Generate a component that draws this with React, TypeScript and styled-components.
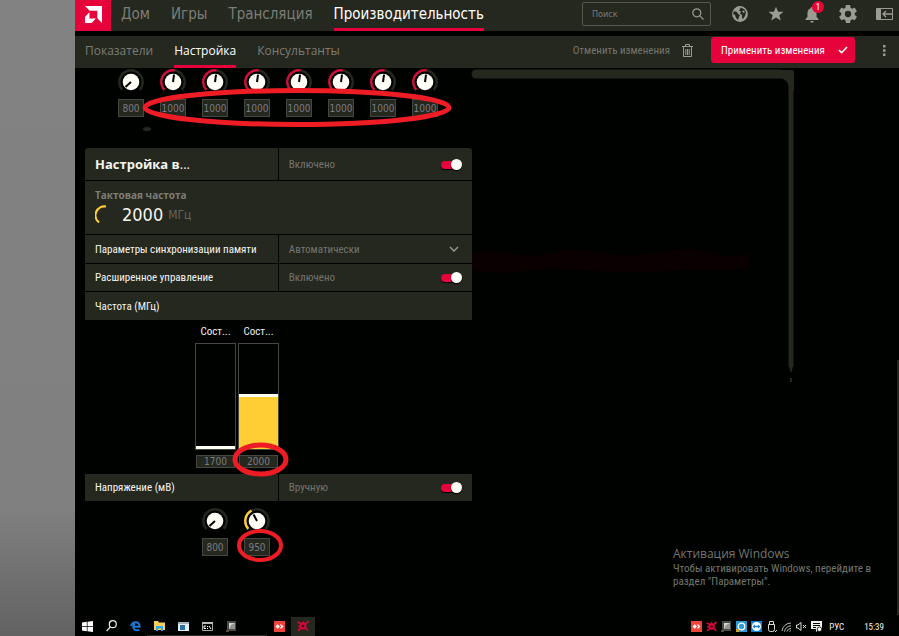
import React from "react";
import styled, { createGlobalStyle, css } from "styled-components";

const PANEL = "#25281f";
const RED = "#e6033b";
const YELLOW = "#ffce34";
const MUTED = "#74746f";
const ICON = "#9a9c91";
const MARK = "#ee1c24";

const TEXT = `"Roboto Condensed", Roboto, sans-serif`;
const WIDE = `"Open Sans", "Noto Sans", sans-serif`;
const DISPLAY = `"DejaVu Sans Condensed", "DejaVu Sans", sans-serif`;

const Global = createGlobalStyle`
  * { box-sizing: border-box; }
  body { margin: 0; background: #000200; color: #f4f4f0; font-family: ${TEXT}; font-size: 11px; }
  button, input, select { font: inherit; color: inherit; margin: 0; padding: 0; border: 0; background: none; }
  svg { display: block; flex: none; }
`;

const Page = styled.div`display: flex; min-height: 100vh;`;
const Margin = styled.div`
  flex: 0 0 75px;
  background: linear-gradient(#828282 0%, #808080 80%, #626262 100%);
`;
const Screen = styled.div`flex: 1; min-width: 0; display: flex; flex-direction: column;`;

const TopBar = styled.header`
  display: flex; align-items: stretch; height: 31px; padding-right: 6px; background: ${PANEL};
`;
const Logo = styled.a`
  display: grid; place-items: center; width: 36px; margin-right: 10px; padding-bottom: 3px; background: ${RED};
`;
const Tabs = styled.nav`display: flex; align-items: stretch; gap: 21px;`;
const Tab = styled.a<{ $active?: boolean; $small?: boolean }>`
  display: flex; align-items: center;
  text-decoration: none; white-space: nowrap;
  font-family: ${p => (p.$small ? WIDE : DISPLAY)};
  font-size: ${p => (p.$small ? 12 : 15)}px;
  color: ${p => (p.$active ? "#fff" : "#7c7d76")};
  border-bottom: 3px solid ${p => (p.$active ? RED : "transparent")};
`;
const Search = styled.label`
  display: flex; align-items: center; justify-content: space-between;
  width: 129px; height: 24px; margin: 2px 20px 0 auto; padding: 0 6px 0 9px;
  border: 1px solid #55584e; border-radius: 2px;
`;
const SearchInput = styled.input`
  width: 80px; font-family: ${DISPLAY}; font-size: 9px; outline: 0;
  &::placeholder { color: #7c7d76; opacity: 1; }
`;
const IconGroup = styled.div`display: flex; align-items: center; gap: 18px; padding-bottom: 3px;`;
const IconButton = styled.button`
  position: relative; display: grid; place-items: center; width: 18px; height: 20px; color: ${ICON}; cursor: pointer;
`;
const Badge = styled.span`
  position: absolute; top: -3px; right: -3px; width: 12px; height: 12px; border-radius: 50%;
  background: ${RED}; color: #fff; font-size: 9px; line-height: 12px; text-align: center;
`;

const SubBar = styled.div`
  display: flex; align-items: stretch; height: 32px; margin-top: 5px; padding: 0 6px 0 10px; background: ${PANEL};
`;
const Actions = styled.div`display: flex; align-items: center; margin-left: auto; padding-bottom: 4px;`;
const Discard = styled.button`
  display: flex; align-items: center; gap: 12px; margin-right: 18px; color: ${MUTED}; white-space: nowrap; cursor: pointer;
`;
const Apply = styled.button`
  display: flex; align-items: center; justify-content: space-between;
  width: 144px; height: 26px; margin-right: 20px; padding: 0 7px 0 10px;
  border-radius: 3px; background: ${RED}; color: #fff; white-space: nowrap; cursor: pointer;
`;

const Body = styled.main`position: relative; flex: 1; padding: 1px 0 0 10px;`;
const Settings = styled.div`width: 47.5%; min-width: 370px;`;
const Annotated = styled.div`position: relative;`;

const DialRow = styled.div<{ $indent: number }>`
  position: relative; display: flex; gap: 16px; padding-left: ${p => p.$indent}px;
`;
const DialItem = styled.label`display: flex; flex-direction: column; width: 26px;`;
const ValueBox = styled.input<{ $flat?: boolean }>`
  width: ${p => (p.$flat ? 39 : 26)}px; height: ${p => (p.$flat ? 13 : 18)}px;
  border: 1px solid #45483e; background: ${PANEL}; color: #7c7a80;
  font-family: ${DISPLAY}; font-size: 10px; text-align: center; outline: 0;
  ${p => !p.$flat && css`margin-top: 4px;`}
`;
const Mark = styled.svg`position: absolute; overflow: visible; pointer-events: none; z-index: 2;`;
const DialMark = styled(Mark)`left: 58px; top: 18px;`;
const BarMark = styled(Mark)`left: -6px; top: -12px;`;
const VoltMark = styled(Mark)`left: -7px; top: 21px;`;

const Card = styled.section`
  display: grid; gap: 1px; margin-top: 31px; border-radius: 3px 3px 0 0; overflow: hidden;
`;
const Row = styled.div<{ $h: number; $single?: boolean }>`
  display: grid; grid-template-columns: ${p => (p.$single ? "1fr" : "1fr 1fr")}; gap: 1px; height: ${p => p.$h}px;
`;
const Cell = styled.div`
  display: flex; align-items: center; justify-content: space-between;
  padding: 0 10px; background: ${PANEL}; white-space: nowrap; min-width: 0;
`;
const Title = styled.h2`margin: 0; font-family: ${WIDE}; font-size: 13px; font-weight: 700;`;
const Ellipsis = styled.span`font-weight: 400;`;
const State = styled.span`color: ${MUTED};`;
const Toggle = styled.input`
  appearance: none; position: relative; width: 21px; height: 11px; cursor: pointer;
  &::before { content: ""; position: absolute; left: 0; top: 2px; width: 18px; height: 8px; border-radius: 4px; background: ${RED}; box-shadow: 0 1px 1px #000; }
  &::after { content: ""; position: absolute; right: 0; top: 0; width: 11px; height: 11px; border-radius: 50%; background: #fffff8; box-shadow: 0 1px 1px #000; }
`;
const SelectWrap = styled.div`
  display: grid; grid-template-columns: 1fr 10px; align-items: center; flex: 1; padding-right: 3px;
`;
const Select = styled.select`appearance: none; color: ${MUTED}; outline: 0;`;
const Clock = styled.div`
  display: flex; flex-direction: column; justify-content: center; padding: 0 10px; background: ${PANEL};
`;
const ClockLabel = styled.div`color: #7c7d76; font-family: ${WIDE}; font-size: 10px; font-weight: 700; line-height: 14px;`;
const ClockValue = styled.div`display: flex; align-items: center; font-family: ${DISPLAY}; line-height: 26px;`;
const Big = styled.span`margin: 0 5px 0 16px; font-size: 18px;`;
const Unit = styled.span`color: #65665f; font-size: 12px;`;

const Bars = styled.div`display: flex; gap: 2px; padding: 4px 0 6px 110px;`;
const BarItem = styled.label`display: flex; flex-direction: column; align-items: center; width: 41px;`;
const BarName = styled.span`line-height: 16px; margin-bottom: 3px;`;
const Track = styled.div`
  display: flex; flex-direction: column; justify-content: flex-end; width: 100%; height: 107px; margin-bottom: 5px;
  border: 1px solid #45483e;
`;
const Fill = styled.div`border-top: 3px solid #fffff4; background: ${YELLOW};`;
const BoxWrap = styled.div`position: relative; height: 13px; display: flex;`;
const DialWrap = styled.div`position: relative;`;
const Section = styled.div`margin-bottom: 7px;`;

const Strokes = styled.svg`position: absolute; left: 397px; top: 0; overflow: visible; pointer-events: none;`;
const Speck = styled.svg`position: absolute; left: 58px; top: 58px;`;
const ScrollThumb = styled.div`position: absolute; right: 0; top: 292px; bottom: 2px; width: 2px; background: #24261f;`;
const Watermark = styled.aside`
  position: absolute; right: 24px; bottom: 29px; width: 202px; color: #74776e; line-height: 13px;
`;
const WatermarkTitle = styled.div`font-family: ${WIDE}; font-size: 12px; line-height: 17px;`;

const Taskbar = styled.footer`display: flex; align-items: stretch; justify-content: space-between; height: 19px; padding-right: 15px;`;
const TaskGroup = styled.div`display: flex;`;
const Task = styled.button<{ $open?: boolean; $active?: boolean }>`
  display: grid; place-items: center; width: 24px; cursor: pointer;
  background: ${p => (p.$active ? "#25281f" : "none")};
  border-bottom: 1px solid ${p => (p.$open ? "#2b2d28" : "transparent")};
`;
const Tray = styled.div`display: flex; align-items: center; gap: 4px;`;
const TrayText = styled.span<{ $gap: number }>`margin-left: ${p => p.$gap}px; font-size: 9px;`;

function arc(cx: number, cy: number, r: number, from: number, to: number) {
  const pt = (a: number) => {
    const t = ((a - 90) * Math.PI) / 180;
    return `${(cx + r * Math.cos(t)).toFixed(2)} ${(cy + r * Math.sin(t)).toFixed(2)}`;
  };
  return `M${pt(from)}A${r} ${r} 0 ${to - from > 180 ? 1 : 0} 1 ${pt(to)}`;
}

function Dial({ angle, color, value }: { angle: number; color: string; value: string }) {
  return (
    <DialItem>
      <svg width="26" height="26" viewBox="0 0 26 26">
        <path d={arc(13, 13, 11.7, -132, 132)} fill="none" stroke="#25281f" strokeWidth="2.4" />
        {angle > -130 && <path d={arc(13, 13, 11.7, -132, angle)} fill="none" stroke={color} strokeWidth="2.4" />}
        <circle cx="13" cy="13" r="8.3" fill="#fffff8" />
        <path d="M13 13V5.6" stroke="#000" strokeWidth="2" transform={`rotate(${angle} 13 13)`} />
      </svg>
      <ValueBox defaultValue={value} aria-label="Напряжение" />
    </DialItem>
  );
}

const AmdSwirl = ({ size = 12 }: { size?: number }) => (
  <svg width={size} height={size} viewBox="0 0 12 12" fill="none" stroke="#d5083c">
    <path d="M.5 2l3 1.500M11.500 1L8.500 4M1 10.500l3-2M11 10.500L8.500 8M5.500 1.500l1 2M1 6.500h2" strokeWidth="1.700" />
    <circle cx="6" cy="6" r="2.500" strokeWidth="2" fill="#5a0018" />
  </svg>
);
const AnyDesk = () => (
  <svg width="11" height="11" viewBox="0 0 11 11">
    <path d="M0 0h11v11H0z" fill="#ef443b" />
    <path d="M1.500 5.500l2.200-2.200 2.200 2.200-2.200 2.200zM6 4l1-.7 2.500 2.200L7 7.700 6 7l1.500-1.500z" fill="#fff" />
  </svg>
);
const Chip = () => (
  <svg width="11" height="11" viewBox="0 0 11 11">
    <path d="M1 0h9v10H1z" fill="#4b4b48" /><path d="M3 2h6v6H3z" fill="#d5d5d0" /><path d="M5 4l4-2v6H3z" fill="#969690" />
    <path d="M0 9h3v2H0z" fill="#5d4d30" />
  </svg>
);

const volts = ["800", "1000", "1000", "1000", "1000", "1000", "1000", "1000"];
const states = [{ v: "1700", fill: 0 }, { v: "2000", fill: 49 }];

export default function App() {
  return (
    <Page>
      <Global />
      <Margin />
      <Screen>
        <TopBar>
          <Logo href="#" aria-label="AMD">
            <svg width="17" height="17" viewBox="0 0 16 16" fill="#fff">
              <path d="M0 0H16V16L11.6 11.6V4.4H4.4zM4.2 5.8V11.8H10.2L6.2 16H0V10z" />
            </svg>
          </Logo>
          <Tabs>
            <Tab href="#">Дом</Tab>
            <Tab href="#">Игры</Tab>
            <Tab href="#">Трансляция</Tab>
            <Tab href="#" $active>Производительность</Tab>
          </Tabs>
          <Search>
            <SearchInput type="search" placeholder="Поиск" aria-label="Поиск" />
            <svg width="12" height="12" viewBox="0 0 12 12" fill="none" stroke={ICON} strokeWidth="1.2">
              <circle cx="4.8" cy="4.8" r="4" /><path d="M7.8 7.8l3.7 3.7" />
            </svg>
          </Search>
          <IconGroup>
            <IconButton aria-label="Браузер">
              <svg width="16" height="16" viewBox="0 0 16 16">
                <circle cx="8" cy="8" r="7.9" fill={ICON} />
                <path d="M2 5l3 1 1 2 2 1-1 2-1 3-2-2-1-3-2-1zM9 1.5l3.5 2L14 6l-1 4-2 3-1-1V9L8 7.500l1-2-2-1z" fill={PANEL} />
                <path d="M10 5l2-.5 1 1.500-1.500 1z" fill={ICON} />
              </svg>
            </IconButton>
            <IconButton aria-label="Избранное">
              <svg width="16" height="16" viewBox="0 0 16 16" fill={ICON}><path d="M8 .8l2.100 5H15.500l-4.200 3.400 1.500 5.300L8 11.400 3.200 14.500l1.500-5.300L.5 5.800H5.900z" /></svg>
            </IconButton>
            <IconButton aria-label="Уведомления">
              <svg width="16" height="17" viewBox="0 0 16 17" fill={ICON}><path d="M8 1c.8 0 1.300.5 1.300 1.300C11.500 3 12.500 4.800 12.500 7v4l2 2v1h-13v-1l2-2V7c0-2.200 1-4 3.200-4.700C6.700 1.500 7.200 1 8 1zM6.200 15h3.600a1.800 1.800 0 0 1-3.600 0z" /></svg>
              <Badge>1</Badge>
            </IconButton>
            <IconButton aria-label="Параметры">
              <svg width="18" height="18" viewBox="2 2 20 20" fill={ICON}><path d="M19.430 12.980c.04-.32.07-.64.07-.98s-.03-.66-.07-.98l2.110-1.650c.19-.15.24-.42.12-.64l-2-3.460c-.12-.22-.39-.3-.61-.22l-2.490 1c-.52-.4-1.080-.73-1.690-.98l-.38-2.650C14.460 2.180 14.250 2 14 2h-4c-.25 0-.46.18-.49.42l-.38 2.650c-.61.25-1.170.59-1.690.98l-2.490-1c-.23-.09-.49 0-.61.22l-2 3.460c-.13.22-.07.49.12.64l2.110 1.650c-.04.32-.07.65-.07.98s.03.66.07.98l-2.110 1.650c-.19.15-.24.42-.12.64l2 3.460c.12.22.39.3.61.22l2.490-1c.52.4 1.080.73 1.690.98l.38 2.650c.03.24.24.42.49.42h4c.25 0 .46-.18.49-.42l.38-2.650c.61-.25 1.170-.59 1.690-.98l2.490 1c.23.09.49 0 .61-.22l2-3.460c.12-.22.07-.49-.12-.64l-2.110-1.650zM12 15.500a3.500 3.500 0 1 1 0-7 3.500 3.500 0 0 1 0 7z" /></svg>
            </IconButton>
            <IconButton aria-label="Свернуть панель">
              <svg width="17" height="12" viewBox="0 0 17 12"><path d="M.5.5h16v11H.5z" fill="none" stroke={ICON} /><path d="M1 1h4v10H1z" fill={ICON} /><path d="M16 6H7M10 3L7 6l3 3" fill="none" stroke={ICON} strokeWidth="1.400" /></svg>
            </IconButton>
          </IconGroup>
        </TopBar>

        <SubBar>
          <Tabs>
            <Tab href="#" $small>Показатели</Tab>
            <Tab href="#" $small $active>Настройка</Tab>
            <Tab href="#" $small>Консультанты</Tab>
          </Tabs>
          <Actions>
            <Discard>
              Отменить изменения
              <svg width="11" height="13" viewBox="0 0 11 13" fill="none" stroke={ICON}><path d="M0 2.500h11M3.500 2V.5h4V2M1.500 3v9.500h8V3M3.800 5v6M5.500 5v6M7.200 5v6" /></svg>
            </Discard>
            <Apply>
              Применить изменения
              <svg width="10" height="8" viewBox="0 0 10 8" fill="none" stroke="#fff" strokeWidth="1.600"><path d="M1 4.200l2.600 2.500L9 1" /></svg>
            </Apply>
            <IconButton aria-label="Ещё">
              <svg width="3" height="11" viewBox="0 0 3 11" fill={ICON}><path d="M0 0h2.500v2.500H0zM0 4.200h2.500v2.500H0zM0 8.400h2.500v2.500H0z" /></svg>
            </IconButton>
          </Actions>
        </SubBar>

        <Body>
          <Strokes width="322" height="320" viewBox="472 68 322 320">
            <path d="M476 74H788Q791 74 791 80V366" fill="none" stroke={PANEL} strokeWidth="5" />
            <path d="M476 74H780" stroke={PANEL} strokeWidth="9" strokeLinecap="round" />
            <path d="M778 70h14q2 0 2 3v18h-5q0-12-9-13z" fill={PANEL} />
            <path d="M788.500 365h5l-2 7h-1zM790 378h2v4h-2z" fill={PANEL} />
            <path d="M472 254q20-4 40 0t40-1 50 0 60-1 50 1 34 0q4 2 4 8t-6 9q-40-2-80 1t-80-1-60 1-52-1z" fill="#0b0001" />
          </Strokes>
          <Settings>
            <Annotated>
              <DialRow $indent={33}>
                {volts.map((v, i) => <Dial key={i} value={v} angle={i ? 8 : -132} color="#d80b3b" />)}
              </DialRow>
              <DialMark width="308" height="40" viewBox="143 87 308 40"><ellipse cx="297" cy="107.500" rx="152" ry="17" fill="none" stroke={MARK} strokeWidth="5" /></DialMark>
              <Speck width="8" height="4" viewBox="0 0 8 4"><ellipse cx="4" cy="2" rx="4" ry="2" fill="#25281f" /></Speck>
            </Annotated>

            <Card>
              <Row $h={32}>
                <Cell><Title>Настройка в<Ellipsis>...</Ellipsis></Title></Cell>
                <Cell><State>Включено</State><Toggle type="checkbox" defaultChecked aria-label="Настройка видеопамяти" /></Cell>
              </Row>
              <Row $h={53} $single>
                <Clock>
                  <ClockLabel>Тактовая частота</ClockLabel>
                  <ClockValue>
                    <svg width="11" height="20" viewBox="0 0 11 20"><path d="M11 1.500A9 9 0 0 0 4 17.500" fill="none" stroke={YELLOW} strokeWidth="2.200" /></svg>
                    <Big>2000</Big><Unit>МГц</Unit>
                  </ClockValue>
                </Clock>
              </Row>
              <Row $h={28}>
                <Cell><label htmlFor="timing">Параметры синхронизации памяти</label></Cell>
                <Cell>
                  <SelectWrap>
                    <Select id="timing"><option>Автоматически</option></Select>
                    <svg width="10" height="6" viewBox="0 0 10 6" fill="none" stroke={ICON} strokeWidth="1.400"><path d="M1 1l4 4 4-4" /></svg>
                  </SelectWrap>
                </Cell>
              </Row>
              <Row $h={27}>
                <Cell>Расширенное управление</Cell>
                <Cell><State>Включено</State><Toggle type="checkbox" defaultChecked aria-label="Расширенное управление" /></Cell>
              </Row>
              <Row $h={28} $single><Cell>Частота (МГц)</Cell></Row>
            </Card>

            <Bars>
              {states.map((s, i) => (
                <BarItem key={s.v}>
                  <BarName>Сост...</BarName>
                  <Track><Fill style={{ height: `${s.fill + 3}%` }} /></Track>
                  <BoxWrap>
                    <ValueBox $flat defaultValue={s.v} />
                    {i === 1 && <BarMark width="55" height="33" viewBox="0 0 55 33"><ellipse cx="27.500" cy="16.500" rx="25.500" ry="14.500" fill="none" stroke={MARK} strokeWidth="5" /></BarMark>}
                  </BoxWrap>
                </BarItem>
              ))}
            </Bars>

            <Section>
              <Row $h={27}>
                <Cell>Напряжение (мВ)</Cell>
                <Cell><State>Вручную</State><Toggle type="checkbox" defaultChecked aria-label="Напряжение" /></Cell>
              </Row>
            </Section>
            <DialRow $indent={117}>
              <DialWrap><Dial value="800" angle={-132} color={YELLOW} /></DialWrap>
              <DialWrap>
                <Dial value="950" angle={-28} color={YELLOW} />
                <VoltMark width="46" height="33" viewBox="0 0 46 33"><ellipse cx="23" cy="16.500" rx="21" ry="14.500" fill="none" stroke={MARK} strokeWidth="4" /></VoltMark>
              </DialWrap>
            </DialRow>
          </Settings>
          <ScrollThumb />
          <Watermark>
            <WatermarkTitle>Активация Windows</WatermarkTitle>
            Чтобы активировать Windows, перейдите в раздел "Параметры".
          </Watermark>
        </Body>

        <Taskbar>
          <TaskGroup>
            <Task aria-label="Пуск"><svg width="11" height="11" viewBox="0 0 11 11" fill="#fff"><path d="M0 1.500L4.800.8v4.400H0zM5.500.7L11 0v5.200H5.500zM0 5.900h4.800v4.400L0 9.600zM5.500 5.900H11V11l-5.500-.7z" /></svg></Task>
            <Task aria-label="Поиск в Windows"><svg width="11" height="12" viewBox="0 0 11 12" fill="none" stroke="#eee" strokeWidth="1.200"><circle cx="6.800" cy="4.200" r="3.500" /><path d="M4.300 6.800L.6 11" /></svg></Task>
            <Task aria-label="Edge"><svg width="11" height="11" viewBox="0 0 11 11"><path d="M1 5Q2 1.200 5.700 1.200 9.600 1.200 9.600 5.800H3.200Q3.500 10.500 9.300 8.800M3.200 5.800Q3.500 3.500 5 3" fill="none" stroke="#1b78d4" strokeWidth="1.900" /></svg></Task>
            <Task $open aria-label="Проводник"><svg width="11" height="10" viewBox="0 0 11 10"><path d="M0 0h4l1 1.500h6V9H0z" fill="#f6cf62" /><path d="M2 5h7v5H7V7.500H4V10H2z" fill="#35a9e1" /></svg></Task>
            <Task $open aria-label="Приложение"><svg width="11" height="9" viewBox="0 0 11 9"><path d="M0 0h11v9H0z" fill="#e9eef0" /><path d="M0 0h11v2H0z" fill="#a5b3bb" /><path d="M2 3h5v5H2z" fill="#2b6fae" /></svg></Task>
            <Task $open aria-label="Командная строка"><svg width="11" height="9" viewBox="0 0 11 9"><path d="M.5.5h10v8H.5z" fill="#000" stroke="#aaa" /><path d="M0 0h11v2H0z" fill="#bbb" /><path d="M2 4h2M2 4v2.500h2M5.500 4v1M5.500 6v1M7 4l2 3" stroke="#fff" fill="none" /></svg></Task>
            <Task $open aria-label="Процессор"><Chip /></Task>
            <Task $open aria-label="Окно" />
            <Task aria-label="AnyDesk"><AnyDesk /></Task>
            <Task $active aria-label="Radeon"><AmdSwirl /></Task>
          </TaskGroup>
          <Tray>
            <AnyDesk />
            <AmdSwirl size={11} />
            <Chip />
            <svg width="11" height="11" viewBox="0 0 11 11"><path d="M0 0h11v11H0z" fill="#2a9bd8" /><circle cx="5.500" cy="5.500" r="3.300" fill="none" stroke="#fff" strokeWidth="1.300" /><path d="M0 8h3v3H0z" fill="#caa338" /></svg>
            <svg width="11" height="11" viewBox="0 0 11 11"><path d="M0 0h11v11H0z" fill="#1280d8" /><circle cx="5.500" cy="5.500" r="4.600" fill="#fff" /><path d="M1.500 5.500l2.500-2v1.200h3V3.500l2.500 2-2.500 2V6.300H4v1.200z" fill="#1280d8" /></svg>
            <svg width="11" height="12" viewBox="0 0 11 12" fill="none" stroke="#ddd"><path d="M3.500 3.500V.5h4v3M2.500 3.500h6v5q0 2-2 2h-2q-2 0-2-2zM9 11l2-2" /></svg>
            <svg width="11" height="11" viewBox="0 0 11 11" fill="none" stroke="#bbb"><path d="M1 10A9 9 0 0 1 10 2M3.500 10.500A6.500 6.500 0 0 1 10 4.800M6 10.500A4 4 0 0 1 10 7.500M8.500 10.500L10 9.500" /></svg>
            <svg width="11" height="9" viewBox="0 0 11 9" fill="none" stroke="#ddd"><path d="M.5 3v3H2l3 2.500v-8L2 3zM7 3l3 3M10 3L7 6" /></svg>
            <svg width="11" height="11" viewBox="0 0 11 11"><path d="M0 0h11v8H8l-3 3V8H0z" fill="#f2f2f2" /><path d="M2 2.500h7M2 4.500h7M2 6.500h3" stroke="#000" /><circle cx="8.500" cy="8.200" r="2.300" fill="#fff" stroke="#000" strokeWidth=".8" /></svg>
            <TrayText $gap={3}>РУС</TrayText>
            <TrayText $gap={16}>15:39</TrayText>
          </Tray>
        </Taskbar>
      </Screen>
    </Page>
  );
}
